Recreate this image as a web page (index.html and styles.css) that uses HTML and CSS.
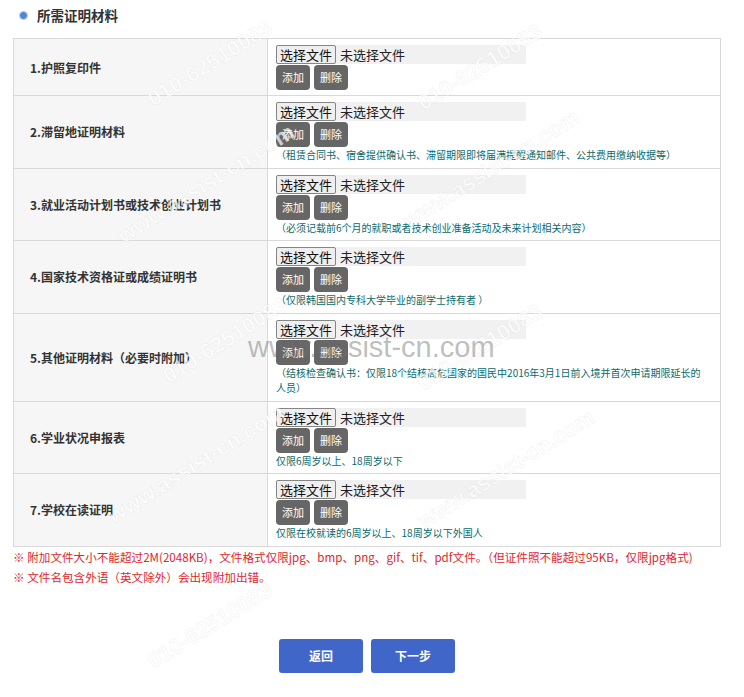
FILE: index.html
```html
<!DOCTYPE html>
<html lang="zh-CN">
<head>
  <meta charset="UTF-8">
  <title>所需证明材料</title>
  <link rel="stylesheet" href="styles.css">
</head>
<body>
  <div class="page">
    <div class="section-title">
      <span class="bullet"></span>
      <span>所需证明材料</span>
    </div>

    <table class="doc-table">
      <tbody>
        <tr>
          <td class="label">1.护照复印件</td>
          <td class="field">
            <div class="file-input"><span class="file-btn">选择文件</span><span class="file-name">未选择文件</span></div>
            <div class="btns"><span class="btn">添加</span><span class="btn">删除</span></div>
          </td>
        </tr>
        <tr>
          <td class="label">2.滞留地证明材料</td>
          <td class="field">
            <div class="file-input"><span class="file-btn">选择文件</span><span class="file-name">未选择文件</span></div>
            <div class="btns"><span class="btn">添加</span><span class="btn">删除</span></div>
            <p class="note">（租赁合同书、宿舍提供确认书、滞留期限即将届满提醒通知邮件、公共费用缴纳收据等）</p>
          </td>
        </tr>
        <tr>
          <td class="label">3.就业活动计划书或技术创业计划书</td>
          <td class="field">
            <div class="file-input"><span class="file-btn">选择文件</span><span class="file-name">未选择文件</span></div>
            <div class="btns"><span class="btn">添加</span><span class="btn">删除</span></div>
            <p class="note">（必须记载前6个月的就职或者技术创业准备活动及未来计划相关内容）</p>
          </td>
        </tr>
        <tr>
          <td class="label">4.国家技术资格证或成绩证明书</td>
          <td class="field">
            <div class="file-input"><span class="file-btn">选择文件</span><span class="file-name">未选择文件</span></div>
            <div class="btns"><span class="btn">添加</span><span class="btn">删除</span></div>
            <p class="note">（仅限韩国国内专科大学毕业的副学士持有者 ）</p>
          </td>
        </tr>
        <tr>
          <td class="label">5.其他证明材料（必要时附加）</td>
          <td class="field">
            <div class="file-input"><span class="file-btn">选择文件</span><span class="file-name">未选择文件</span></div>
            <div class="btns"><span class="btn">添加</span><span class="btn">删除</span></div>
            <p class="note">（结核检查确认书：仅限18个结核高危国家的国民中2016年3月1日前入境并首次申请期限延长的人员）</p>
          </td>
        </tr>
        <tr>
          <td class="label">6.学业状况申报表</td>
          <td class="field">
            <div class="file-input"><span class="file-btn">选择文件</span><span class="file-name">未选择文件</span></div>
            <div class="btns"><span class="btn">添加</span><span class="btn">删除</span></div>
            <p class="note">仅限6周岁以上、18周岁以下</p>
          </td>
        </tr>
        <tr>
          <td class="label">7.学校在读证明</td>
          <td class="field">
            <div class="file-input"><span class="file-btn">选择文件</span><span class="file-name">未选择文件</span></div>
            <div class="btns"><span class="btn">添加</span><span class="btn">删除</span></div>
            <p class="note">仅限在校就读的6周岁以上、18周岁以下外国人</p>
          </td>
        </tr>
      </tbody>
    </table>

    <div class="warn">
      <p>※ 附加文件大小不能超过2M(2048KB)，文件格式仅限jpg、bmp、png、gif、tif、pdf文件。（但证件照不能超过95KB，仅限jpg格式)</p>
      <p>※ 文件名包含外语（英文除外）会出现附加出错。</p>
    </div>

    <div class="actions">
      <a href="#" class="action-btn">返回</a>
      <a href="#" class="action-btn">下一步</a>
    </div>
  </div>

  <!-- 水印 -->
  <div class="watermarks">
    <span class="wm" style="left:150px; top:88px;">010-62510083</span>
    <span class="wm" style="left:420px; top:92px;">010-62510083</span>
    <span class="wm" style="left:120px; top:225px;">www.assist-cn.com</span>
    <span class="wm" style="left:405px; top:210px;">www.assist-cn.com</span>
    <span class="wm" style="left:165px; top:365px;">010-62510083</span>
    <span class="wm" style="left:420px; top:372px;">010-62510083</span>
    <span class="wm" style="left:110px; top:505px;">www.assist-cn.com</span>
    <span class="wm" style="left:420px; top:510px;">www.assist-cn.com</span>
    <span class="wm" style="left:150px; top:650px;">010-62510083</span>
    <span class="wm-flat">www.assist-cn.com</span>
  </div>
</body>
</html>
```
FILE: styles.css
```css
body {
  margin: 0;
  background-color: #fff;
  font-family: "Noto Sans CJK SC", "Liberation Sans", sans-serif;
  color: #333;
}

.page {
  width: 708px;
  padding: 0 0 0 13px;
  position: relative;
}

.section-title {
  display: flex;
  align-items: center;
  gap: 9px;
  height: 30px;
  padding-left: 6px;
  margin-bottom: 8px;
  font-size: 13.5px;
  font-weight: bold;
  color: #333;
}

.bullet {
  width: 7px;
  height: 7px;
  border-radius: 50%;
  background-color: #4f86d8;
  border: 1px solid #c3d5f1;
}

.doc-table {
  width: 708px;
  border-collapse: collapse;
  border: 1px solid #d9d9d9;
}

.doc-table td {
  border: 1px solid #d9d9d9;
  vertical-align: middle;
}

td.label {
  width: 254px;
  box-sizing: border-box;
  padding-left: 16px;
  background-color: #f6f6f6;
  font-size: 12px;
  font-weight: bold;
  color: #333;
}

td.field {
  padding: 6px 8px 5px 8px;
  vertical-align: top;
}

.file-input {
  display: flex;
  align-items: center;
  width: 250px;
  height: 19px;
  background-color: #f1f1f1;
}

.file-btn {
  box-sizing: border-box;
  height: 19px;
  padding: 0 3px;
  border: 1px solid #858585;
  border-radius: 2px;
  background-color: #efefef;
  font-size: 13px;
  line-height: 17px;
  color: #111;
}

.file-name {
  margin-left: 4px;
  font-size: 13px;
  line-height: 19px;
  color: #222;
}

.btns {
  display: flex;
  gap: 4px;
  margin-top: 1px;
}

.btn {
  width: 34px;
  height: 25px;
  border-radius: 4px;
  background-color: #666;
  color: #fff;
  font-size: 11px;
  line-height: 25px;
  text-align: center;
}

.note {
  max-width: 428px;
  margin: 0;
  font-size: 10px;
  line-height: 15.5px;
  color: #086a6c;
}

.warn p {
  margin: 0;
  font-size: 11.6px;
  line-height: 20px;
  color: #e2262a;
}

.actions {
  display: flex;
  justify-content: center;
  gap: 8px;
  margin-top: 52px;
}

.action-btn {
  width: 84px;
  height: 34px;
  border-radius: 3px;
  background-color: #3f66c8;
  color: #fff;
  font-size: 12px;
  font-weight: bold;
  line-height: 34px;
  text-align: center;
  text-decoration: none;
}

.watermarks {
  position: absolute;
  left: 0;
  top: 0;
  width: 744px;
  height: 697px;
  overflow: hidden;
  pointer-events: none;
}

.wm {
  position: absolute;
  font-family: "Liberation Sans", sans-serif;
  font-size: 22px;
  font-weight: bold;
  color: rgba(255, 255, 255, 0.7);
  -webkit-text-stroke: 1px rgba(120, 120, 120, 0.08);
  transform: rotate(-32deg);
  transform-origin: left center;
  white-space: nowrap;
}

.wm-flat {
  position: absolute;
  left: 248px;
  top: 331px;
  font-family: "Liberation Sans", sans-serif;
  font-size: 29px;
  color: rgba(110, 110, 110, 0.45);
  white-space: nowrap;
}
```
